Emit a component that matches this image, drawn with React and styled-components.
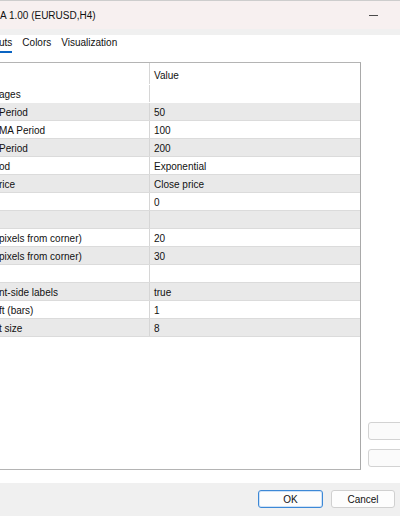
import React from 'react';
import styled, { createGlobalStyle } from 'styled-components';

const GlobalStyle = createGlobalStyle`
  html, body {
    margin: 0;
    padding: 0;
    background: #ffffff;
  }
  body {
    font-family: "Liberation Sans", Arial, sans-serif;
    font-size: 10px;
    color: #111111;
  }
`;

const Window = styled.div`
  width: 400px;
  height: 516px;
  overflow: hidden;
  display: flex;
  flex-direction: column;
  background: #ffffff;
`;

const TitleBar = styled.div`
  height: 29px;
  box-sizing: border-box;
  border-top: 1px solid #cdcdcd;
  background: #f7f0f0;
  display: flex;
  align-items: center;
  flex-shrink: 0;
`;

const Title = styled.span`
  font-size: 10px;
  color: #111111;
  white-space: nowrap;
`;

const Minimize = styled.span`
  margin-left: auto;
  margin-right: 22px;
  width: 9px;
  height: 1px;
  background: #4a4a4a;
`;

const Strip = styled.div`
  height: 6px;
  background: #f0f0f0;
  flex-shrink: 0;
`;

const Main = styled.div`
  height: 448px;
  display: grid;
  grid-template-columns: 361px 1fr;
  background: #ffffff;
`;

const LeftPane = styled.div`
  display: flex;
  flex-direction: column;
`;

const TabBar = styled.div`
  height: 27px;
  box-sizing: border-box;
  padding-top: 2px;
  margin-left: -6px;
  display: flex;
  align-items: flex-start;
`;

const Tab = styled.div`
  padding: 0 5px;
`;

const TabLabel = styled.span`
  display: inline-block;
  line-height: 12px;
  padding-bottom: 2px;
  border-bottom: 2px solid ${(p) => (p.$active ? '#0a64c2' : 'transparent')};
`;

const Grid = styled.div`
  margin-left: -1px;
  height: 408px;
  box-sizing: border-box;
  border: 1px solid #b4b4b4;
  border-right-color: #a9a9a9;
  background: #ffffff;
  display: flex;
  flex-direction: column;
`;

const Row = styled.div`
  display: grid;
  grid-template-columns: 150px 1fr;
  height: ${(p) => p.$height || 18}px;
  box-sizing: border-box;
  background: ${(p) => (p.$shaded ? '#e9e9e9' : '#ffffff')};
  border-bottom: 1px solid ${(p) => (p.$line ? '#dbdbdb' : 'transparent')};
`;

const NameCell = styled.div`
  border-right: 1px solid #d6d6d6;
  display: flex;
  align-items: ${(p) => (p.$top ? 'flex-start' : 'center')};
  padding-top: ${(p) => (p.$top ? '7px' : '2px')};
  box-sizing: border-box;
  white-space: nowrap;
  overflow: hidden;
  text-indent: -1px;
`;

const ValueCell = styled.div`
  padding-left: 4px;
  display: flex;
  align-items: ${(p) => (p.$top ? 'flex-start' : 'center')};
  padding-top: ${(p) => (p.$top ? '7px' : '2px')};
  box-sizing: border-box;
  white-space: nowrap;
`;

const SidePane = styled.div`
  display: flex;
  flex-direction: column;
  justify-content: flex-end;
  gap: 9px;
  padding: 0 0 16px 7px;
`;

const SideButton = styled.div`
  width: 44px;
  height: 18px;
  box-sizing: border-box;
  border: 1px solid #d3d3d3;
  border-radius: 3px;
  background: #fbfbfb;
`;

const Footer = styled.div`
  flex: 1;
  background: #f0f0f0;
  display: flex;
  justify-content: flex-end;
  align-items: flex-start;
  gap: 8px;
  padding: 7px 5px 0 0;
`;

const Button = styled.button`
  width: ${(p) => p.$width}px;
  height: 18px;
  box-sizing: border-box;
  border-radius: 3px;
  border: 1px solid ${(p) => (p.$primary ? '#3c88d6' : '#d0d0d0')};
  box-shadow: ${(p) => (p.$primary ? 'inset 0 0 0 1px #cfe2f7' : 'none')};
  background: #fdfdfd;
  font-family: "Liberation Sans", Arial, sans-serif;
  font-size: 10px;
  color: #111111;
  padding: 1px 0 0;
`;

const rows = [
  { name: 'Period', value: '50' },
  { name: 'MA Period', value: '100' },
  { name: 'Period', value: '200' },
  { name: 'od', value: 'Exponential' },
  { name: 'rice', value: 'Close price' },
  { name: '', value: '0' },
  { name: '', value: '' },
  { name: 'pixels from corner)', value: '20' },
  { name: 'pixels from corner)', value: '30' },
  { name: '', value: '' },
  { name: 'nt-side labels', value: 'true' },
  { name: 'ft (bars)', value: '1' },
  { name: 't size', value: '8' },
];

export default function App() {
  return (
    <>
      <GlobalStyle />
      <Window>
        <TitleBar>
          <Title>A 1.00 (EURUSD,H4)</Title>
          <Minimize />
        </TitleBar>
        <Strip />
        <Main>
          <LeftPane>
            <TabBar>
              <Tab><TabLabel $active>uts</TabLabel></Tab>
              <Tab><TabLabel>Colors</TabLabel></Tab>
              <Tab><TabLabel>Visualization</TabLabel></Tab>
            </TabBar>
            <Grid>
              <Row $height={22}>
                <NameCell $top />
                <ValueCell $top>Value</ValueCell>
              </Row>
              <Row>
                <NameCell>ages</NameCell>
                <ValueCell />
              </Row>
              {rows.map((r, i) => (
                <Row key={i} $shaded={i % 2 === 0} $line>
                  <NameCell>{r.name}</NameCell>
                  <ValueCell>{r.value}</ValueCell>
                </Row>
              ))}
            </Grid>
          </LeftPane>
          <SidePane>
            <SideButton />
            <SideButton />
          </SidePane>
        </Main>
        <Footer>
          <Button $primary $width={65}>OK</Button>
          <Button $width={64}>Cancel</Button>
        </Footer>
      </Window>
    </>
  );
}
